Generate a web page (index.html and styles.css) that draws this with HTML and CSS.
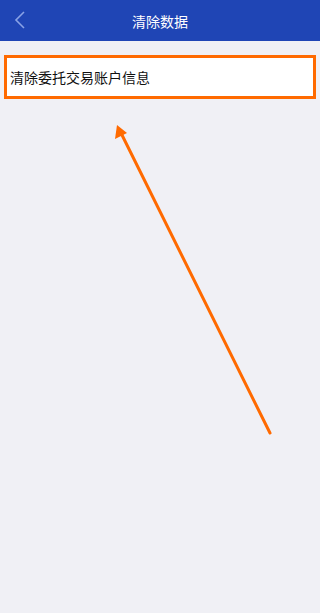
FILE: index.html
```html
<!DOCTYPE html>
<html lang="zh-CN">
<head>
    <meta charset="UTF-8">
    <meta name="viewport" content="width=device-width, initial-scale=1.0">
    <title>清除数据</title>
    <link rel="stylesheet" href="styles.css">
</head>
<body>
    <header class="topbar">
        <a href="#" class="back">
            <svg width="12" height="18" viewBox="0 0 12 18">
                <path d="M10 1 L2 9 L10 17" fill="none" stroke="#8aa3e6" stroke-width="1.6"/>
            </svg>
        </a>
        <h1>清除数据</h1>
    </header>

    <div class="list">
        <div class="row highlight">清除委托交易账户信息</div>
    </div>

    <!-- annotation arrow -->
    <svg class="arrow" width="320" height="613" viewBox="0 0 320 613">
        <line x1="270" y1="433" x2="121" y2="133" stroke="#ff6a00" stroke-width="3" stroke-linecap="round"/>
        <polygon points="117,125 127,133 115,139" fill="#ff6a00"/>
    </svg>
</body>
</html>
```

FILE: styles.css
```css
body {
    margin: 0;
    padding: 0;
    background-color: #f0f0f5;
    font-family: "Noto Sans CJK SC", "Noto Sans", sans-serif;
    height: 613px;
    position: relative;
    overflow: hidden;
}
.topbar {
    height: 41px;
    background-color: #1f45b5;
    display: flex;
    align-items: center;
    justify-content: center;
    position: relative;
}
.topbar h1 {
    margin: 0;
    color: #fff;
    font-size: 14px;
    font-weight: normal;
}
.back {
    position: absolute;
    left: 14px;
    top: 11px;
    display: flex;
}
.list {
    padding: 14px 4px 0;
}
.row {
    background-color: #fff;
    height: 38px;
    display: flex;
    align-items: center;
    padding-left: 3px;
    font-size: 14px;
    color: #111;
}
.highlight {
    border: 3px solid #ff6a00;
}
.arrow {
    position: absolute;
    left: 0;
    top: 0;
    pointer-events: none;
}
```
